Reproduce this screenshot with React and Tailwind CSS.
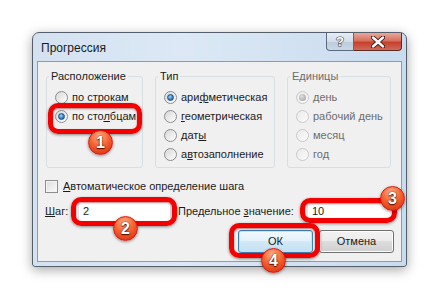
function Radio({ checked, disabled }) {
  return (
    <span
      className={`relative flex h-[13px] w-[13px] shrink-0 items-center justify-center rounded-full border ${
        disabled
          ? "border-[#c9c9c9] bg-[linear-gradient(135deg,#eaeaea,#fbfbfb)]"
          : "border-[#8d8d8d] bg-[linear-gradient(135deg,#d6d6d6,#ffffff)]"
      }`}
    >
      {checked && (
        <span
          className={`h-[7px] w-[7px] rounded-full ${
            disabled
              ? "bg-[radial-gradient(circle_at_40%_35%,#e0e0e0,#9a9a9a)]"
              : "border border-[#1d4f86] bg-[radial-gradient(circle_at_40%_35%,#9fd5f7,#2f7fc4_60%,#154d8c)]"
          }`}
        />
      )}
    </span>
  );
}

function Option({ children, checked, disabled }) {
  return (
    <div className="flex h-[19px] items-center gap-[4px]">
      <Radio checked={checked} disabled={disabled} />
      <span className={disabled ? "text-[#6d6d6d]" : "text-[#1b1b1b]"}>
        {children}
      </span>
    </div>
  );
}

function Group({ title, width, disabled, children }) {
  return (
    <fieldset
      className={`${width} h-[99px] rounded-[3px] border border-[#d5dfe5] pl-[8px] pt-[5px]`}
    >
      <legend
        className={`ml-[-6px] px-[2px] leading-[14px] ${
          disabled ? "text-[#6d6d6d]" : "text-[#1b1b1b]"
        }`}
      >
        {title}
      </legend>
      {children}
    </fieldset>
  );
}

function Button({ children, primary }) {
  return (
    <button
      className={`h-[23px] w-[75px] rounded-[3px] border text-[#1b1b1b] ${
        primary
          ? "border-[#3c7fb1] bg-[linear-gradient(#f1f8fc_0%,#e3f1fa_50%,#d2e9f6_50%,#c4e0f2_100%)] shadow-[inset_0_0_0_1px_#bfe3f7]"
          : "border-[#707070] bg-[linear-gradient(#f2f2f2_0%,#ebebeb_50%,#dddddd_50%,#cfcfcf_100%)] shadow-[inset_0_0_0_1px_#fcfcfc]"
      }`}
    >
      {children}
    </button>
  );
}

function Ring({ className }) {
  return (
    <div
      className={`absolute rounded-[10px] border-[5px] border-[#f30000] shadow-[0_1px_3px_rgba(0,0,0,0.45),inset_0_1px_2px_rgba(120,0,0,0.5)] ${className}`}
    />
  );
}

function Badge({ n, className }) {
  return (
    <div
      className={`absolute flex h-[25px] w-[25px] items-center justify-center rounded-full border border-[#d41a0c] bg-[radial-gradient(circle_at_45%_25%,#ffb08a,#f5622f_45%,#d3240f_100%)] text-[16px] font-bold text-white shadow-[0_1px_3px_rgba(0,0,0,0.4)] [text-shadow:0_0_2px_#5a1000,0_1px_1px_#5a1000] ${className}`}
    >
      {n}
    </div>
  );
}

export default function App() {
  return (
    <div className="relative h-[299px] w-[441px] overflow-hidden bg-white pl-[32px] pt-[32px] font-['Liberation_Sans',Arial,sans-serif] text-[11px]">
      {/* window */}
      <div className="flex h-[235px] w-[375px] flex-col rounded-t-[7px] rounded-b-[3px] border border-[#555f6b] bg-[linear-gradient(90deg,#d3e1f1,#dce8f5_40%,#c9dbef)] shadow-[0_3px_12px_rgba(0,0,0,0.35)]">
        <div className="flex h-[28px] shrink-0 items-start">
          <div className="pl-[8px] pt-[8px] text-[12px] leading-[14px] text-[#1a1a1a]">
            Прогрессия
          </div>
          <div className="ml-auto mr-[4px] flex h-[18px]">
            <div className="flex w-[28px] items-center justify-center rounded-bl-[4px] border border-t-0 border-[#5d6b7e] bg-[linear-gradient(#e6edf5,#d2dde9_50%,#bccbdc_50%,#c9d6e5)]">
              <svg width="12" height="13" viewBox="0 0 12 13">
                <text
                  x="6"
                  y="11"
                  textAnchor="middle"
                  fontSize="13"
                  fontWeight="bold"
                  fontFamily="Liberation Sans, Arial, sans-serif"
                  fill="#fff"
                  stroke="#39495c"
                  strokeWidth="1.2"
                  paintOrder="stroke"
                >
                  ?
                </text>
              </svg>
            </div>
            <div className="flex w-[48px] items-center justify-center rounded-br-[4px] border border-l-0 border-t-0 border-[#5d2a24] bg-[linear-gradient(#e9a99c,#d7705f_45%,#c7402e_55%,#d06a58)]">
              <svg width="14" height="12" viewBox="0 0 14 12">
                <path
                  d="M2 1.5 L12 10.5 M12 1.5 L2 10.5"
                  stroke="#3a1410"
                  strokeWidth="4.2"
                  strokeLinecap="round"
                />
                <path
                  d="M2 1.5 L12 10.5 M12 1.5 L2 10.5"
                  stroke="#ffffff"
                  strokeWidth="2.4"
                  strokeLinecap="round"
                />
              </svg>
            </div>
          </div>
        </div>

        {/* client area */}
        <div className="mx-[4px] flex h-[201px] flex-col border border-[#8a9cb3] bg-[#f0f0f0] pl-[7px] pr-[7px] pt-[7px] text-[#1b1b1b]">
          <div className="flex gap-[12px] pl-[1px]">
            <Group title="Расположение" width="w-[97px]">
              <Option>по строкам</Option>
              <Option checked>
                по сто<span className="underline">л</span>бцам
              </Option>
            </Group>
            <Group title="Тип" width="w-[120px]">
              <Option checked>
                ари<span className="underline">ф</span>метическая
              </Option>
              <Option>
                <span className="underline">г</span>еометрическая
              </Option>
              <Option>
                дат<span className="underline">ы</span>
              </Option>
              <Option>
                а<span className="underline">в</span>тозаполнение
              </Option>
            </Group>
            <Group title="Единицы" width="w-[104px]" disabled>
              <Option checked disabled>
                день
              </Option>
              <Option disabled>рабочий день</Option>
              <Option disabled>месяц</Option>
              <Option disabled>год</Option>
            </Group>
          </div>

          <div className="mt-[10px] flex h-[16px] items-center gap-[5px]">
            <span className="h-[13px] w-[13px] border border-[#8e8f8f] bg-[linear-gradient(135deg,#dcdcdc,#fbfbfb)] shadow-[inset_0_0_0_1px_#f4f4f4]" />
            <span>
              <span className="underline">А</span>втоматическое определение шага
            </span>
          </div>

          <div className="mt-[7px] flex h-[21px] items-center">
            <span className="w-[33px]">
              <span className="underline">Ш</span>аг:
            </span>
            <div className="flex h-[21px] w-[93px] items-center border border-[#abadb3] border-b-[#e3e9ef] border-l-[#e2e3ea] border-r-[#dbdfe6] bg-white pl-[4px]">
              2
            </div>
            <span className="ml-[7px]">
              Предельное <span className="underline">з</span>начение:
            </span>
            <div className="ml-auto flex h-[21px] w-[87px] items-center border border-[#abadb3] border-b-[#e3e9ef] border-l-[#e2e3ea] border-r-[#dbdfe6] bg-white pl-[4px]">
              10
            </div>
          </div>

          <div className="mt-[8px] flex justify-end gap-[6px]">
            <Button primary>ОК</Button>
            <Button>Отмена</Button>
          </div>
        </div>
      </div>

      {/* annotations */}
      <Ring className="left-[48px] top-[103px] h-[31px] w-[94px]" />
      <Ring className="left-[71px] top-[197px] h-[29px] w-[106px]" />
      <Ring className="left-[300px] top-[198px] h-[25px] w-[97px]" />
      <Ring className="left-[229px] top-[223px] h-[35px] w-[91px]" />
      <Badge n="1" className="left-[88px] top-[130px]" />
      <Badge n="2" className="left-[113px] top-[216px]" />
      <Badge n="3" className="left-[380px] top-[186px]" />
      <Badge n="4" className="left-[261px] top-[248px]" />
    </div>
  );
}
